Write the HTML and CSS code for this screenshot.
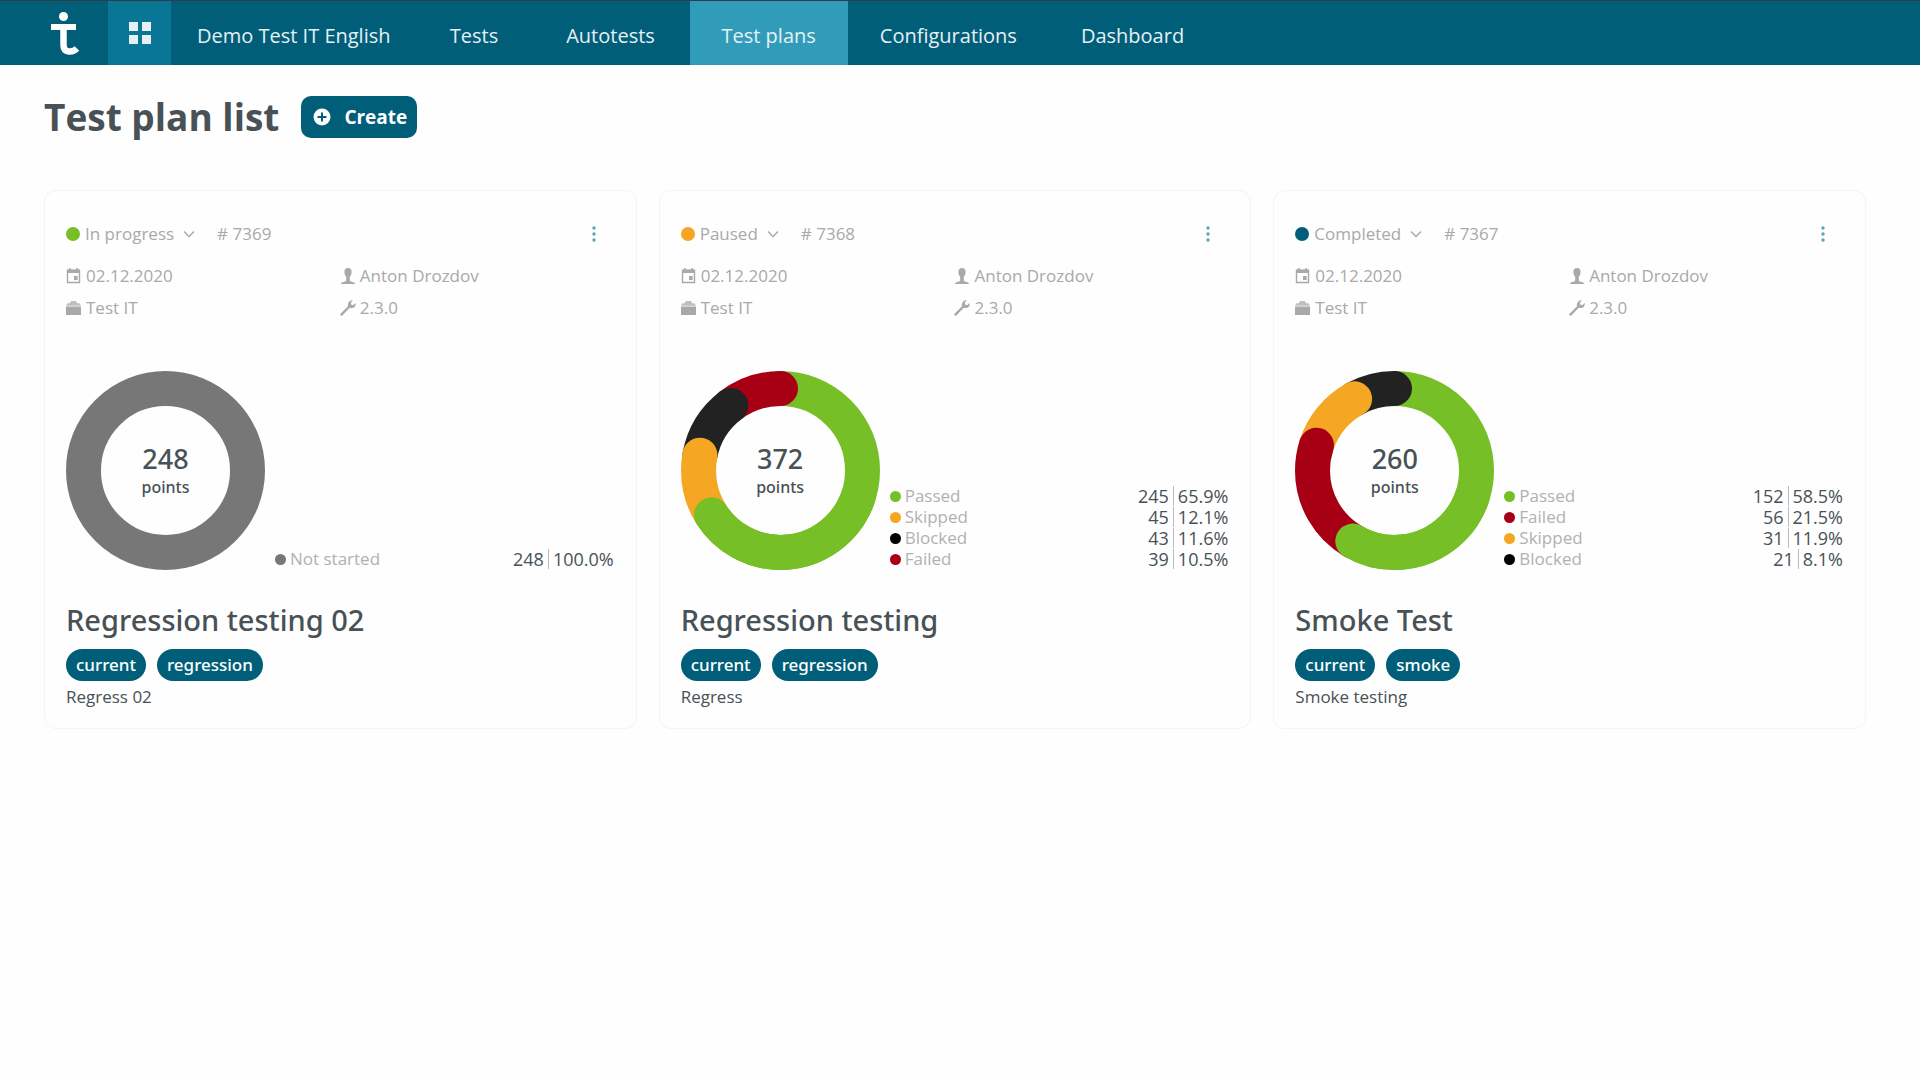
FILE: index.html
```html
<!DOCTYPE html>
<html lang="en">
<head>
<meta charset="utf-8">
<meta name="viewport" content="width=device-width, initial-scale=1">
<title>Test plans</title>
<link rel="stylesheet" href="styles.css">
</head>
<body>
<svg class="sprite" aria-hidden="true">
  <symbol id="i-calendar" viewBox="0 0 16 18"><path d="M1.500 3.500h12v12h-12z" fill="none" stroke="currentColor" stroke-width="1.400"/><path d="M1 2.500h13v3.500H1zM3 1h1.600v3H3zM10.400 1H12v3h-1.600zM8 9h3.600v4H8z"/></symbol>
  <symbol id="i-case" viewBox="0 0 16 18"><path d="M0 7.500h15V16H0z"/><path d="M0 6.700 1.500 4.300h2.300L5 2h5l1.200 2.300h2.300L15 6.700z" opacity=".75"/></symbol>
  <symbol id="i-user" viewBox="0 0 16 18"><path d="M8 1c2.300 0 3.600 1.500 3.600 3.900 0 2.300-.9 3.700-1.800 4.900v3.400c0 1 1.200 1.300 3 1.700 1.400.3 2.200.8 2.200 2.100H1c0-1.300.8-1.800 2.200-2.100 1.800-.4 3-.7 3-1.700V9.800C5.300 8.600 4.400 7.200 4.400 4.900 4.400 2.500 5.700 1 8 1z"/></symbol>
  <symbol id="i-wrench" viewBox="0 0 16 18"><path d="M12.800 1.300 10.900 3.600l.4 2.200 2.200.2L15.700 4c.6 2.700-1.400 5.200-4.100 5.100-.8 0-1.200-.1-1.800-.3L2.300 16.400c-1.200 1-2.800-.4-1.800-1.700L8 7.300C7.200 4.200 9.600 1 12.800 1.300z"/></symbol>
  <symbol id="i-chevron" viewBox="0 0 12 8"><path d="M1 1.500 6 6.500l5-5" fill="none" stroke="currentColor" stroke-width="1.500"/></symbol>
  <symbol id="i-more" viewBox="0 0 6 18"><circle cx="3" cy="3" r="1.700"/><circle cx="3" cy="9" r="1.700"/><circle cx="3" cy="15" r="1.700"/></symbol>
</svg>

<header class="topbar">
  <a class="logo" href="#" aria-label="Test IT home">
    <svg width="28" height="44" viewBox="0 0 28 44"><circle cx="12.500" cy="4.500" r="4.500" fill="#fff"/><path d="M0 15h25" fill="none" stroke="#fff" stroke-width="6"/><path d="M12.500 15v18c0 8.500 9.500 7.500 13.500 3.500" fill="none" stroke="#fff" stroke-width="6.500"/></svg>
  </a>
  <button class="apps" type="button" aria-label="Projects">
    <svg width="22" height="22" viewBox="0 0 22 22"><path d="M0 0h9v9H0zM13 0h9v9h-9zM0 13h9v9H0zM13 13h9v9h-9z"/></svg>
  </button>
  <nav class="menu">
    <a class="menu-project" href="#">Demo Test IT English</a>
    <a class="menu-short" href="#">Tests</a>
    <a href="#">Autotests</a>
    <a class="active" href="#" aria-current="page">Test plans</a>
    <a href="#">Configurations</a>
    <a href="#">Dashboard</a>
  </nav>
</header>

<main class="page">
  <div class="page-head">
    <h1>Test plan list</h1>
    <button class="create" type="button">
      <svg width="18" height="18" viewBox="0 0 18 18"><circle cx="9" cy="9" r="8.500" fill="#fff"/><path d="M9 4.500v9M4.500 9h9" stroke="#005e79" stroke-width="2"/></svg>
      Create
    </button>
  </div>

  <div class="plans">
    <article class="card">
      <div class="card-top">
        <label class="status"><span class="dot running"></span><select aria-label="Status"><option>In progress</option></select><svg class="chevron"><use href="#i-chevron"/></svg></label>
        <span># 7369</span>
        <button class="more" type="button" aria-label="More"><svg><use href="#i-more"/></svg></button>
      </div>
      <div class="meta">
        <span><svg><use href="#i-calendar"/></svg>02.12.2020</span>
        <span><svg><use href="#i-user"/></svg>Anton Drozdov</span>
        <span><svg><use href="#i-case"/></svg>Test IT</span>
        <span><svg><use href="#i-wrench"/></svg>2.3.0</span>
      </div>
      <div class="stats">
        <div class="donut">
          <svg viewBox="0 0 199 199"><circle class="arc s-none" cx="99.500" cy="99.500" r="82"/></svg>
          <div class="total"><strong>248</strong><span>points</span></div>
        </div>
        <table class="legend">
          <tr><th scope="row"><span class="dot none"></span>Not started</th><td><span>248</span><span class="pct">100.0%</span></td></tr>
        </table>
      </div>
      <h2>Regression testing 02</h2>
      <div class="tags"><span>current</span><span>regression</span></div>
      <p>Regress 02</p>
    </article>

    <article class="card">
      <div class="card-top">
        <label class="status"><span class="dot skipped"></span><select aria-label="Status"><option>Paused</option></select><svg class="chevron"><use href="#i-chevron"/></svg></label>
        <span># 7368</span>
        <button class="more" type="button" aria-label="More"><svg><use href="#i-more"/></svg></button>
      </div>
      <div class="meta">
        <span><svg><use href="#i-calendar"/></svg>02.12.2020</span>
        <span><svg><use href="#i-user"/></svg>Anton Drozdov</span>
        <span><svg><use href="#i-case"/></svg>Test IT</span>
        <span><svg><use href="#i-wrench"/></svg>2.3.0</span>
      </div>
      <div class="stats">
        <div class="donut">
          <svg viewBox="0 0 199 199">
            <circle class="arc s-passed" cx="99.500" cy="99.500" r="82" pathLength="100" stroke-dasharray="65.900 100"/>
            <circle class="arc s-failed" cx="99.500" cy="99.500" r="82" pathLength="100" stroke-dasharray="10.500 100" stroke-dashoffset="-89.500"/>
            <circle class="arc s-blocked" cx="99.500" cy="99.500" r="82" pathLength="100" stroke-dasharray="11.600 100" stroke-dashoffset="-78"/>
            <circle class="arc s-skipped" cx="99.500" cy="99.500" r="82" pathLength="100" stroke-dasharray="12.100 100" stroke-dashoffset="-65.900"/>
            <circle class="arc s-passed" cx="99.500" cy="99.500" r="82" pathLength="100" stroke-dasharray="35.900 100" stroke-dashoffset="-30"/>
          </svg>
          <div class="total"><strong>372</strong><span>points</span></div>
        </div>
        <table class="legend">
          <tr><th scope="row"><span class="dot passed"></span>Passed</th><td><span>245</span><span class="pct">65.9%</span></td></tr>
          <tr><th scope="row"><span class="dot skipped"></span>Skipped</th><td><span>45</span><span class="pct">12.1%</span></td></tr>
          <tr><th scope="row"><span class="dot blocked"></span>Blocked</th><td><span>43</span><span class="pct">11.6%</span></td></tr>
          <tr><th scope="row"><span class="dot failed"></span>Failed</th><td><span>39</span><span class="pct">10.5%</span></td></tr>
        </table>
      </div>
      <h2>Regression testing</h2>
      <div class="tags"><span>current</span><span>regression</span></div>
      <p>Regress</p>
    </article>

    <article class="card">
      <div class="card-top">
        <label class="status"><span class="dot completed"></span><select aria-label="Status"><option>Completed</option></select><svg class="chevron"><use href="#i-chevron"/></svg></label>
        <span># 7367</span>
        <button class="more" type="button" aria-label="More"><svg><use href="#i-more"/></svg></button>
      </div>
      <div class="meta">
        <span><svg><use href="#i-calendar"/></svg>02.12.2020</span>
        <span><svg><use href="#i-user"/></svg>Anton Drozdov</span>
        <span><svg><use href="#i-case"/></svg>Test IT</span>
        <span><svg><use href="#i-wrench"/></svg>2.3.0</span>
      </div>
      <div class="stats">
        <div class="donut">
          <svg viewBox="0 0 199 199">
            <circle class="arc s-passed" cx="99.500" cy="99.500" r="82" pathLength="100" stroke-dasharray="58.500 100"/>
            <circle class="arc s-blocked" cx="99.500" cy="99.500" r="82" pathLength="100" stroke-dasharray="8.100 100" stroke-dashoffset="-91.900"/>
            <circle class="arc s-skipped" cx="99.500" cy="99.500" r="82" pathLength="100" stroke-dasharray="11.900 100" stroke-dashoffset="-80"/>
            <circle class="arc s-failed" cx="99.500" cy="99.500" r="82" pathLength="100" stroke-dasharray="21.500 100" stroke-dashoffset="-58.500"/>
            <circle class="arc s-passed" cx="99.500" cy="99.500" r="82" pathLength="100" stroke-dasharray="28.500 100" stroke-dashoffset="-30"/>
          </svg>
          <div class="total"><strong>260</strong><span>points</span></div>
        </div>
        <table class="legend">
          <tr><th scope="row"><span class="dot passed"></span>Passed</th><td><span>152</span><span class="pct">58.5%</span></td></tr>
          <tr><th scope="row"><span class="dot failed"></span>Failed</th><td><span>56</span><span class="pct">21.5%</span></td></tr>
          <tr><th scope="row"><span class="dot skipped"></span>Skipped</th><td><span>31</span><span class="pct">11.9%</span></td></tr>
          <tr><th scope="row"><span class="dot blocked"></span>Blocked</th><td><span>21</span><span class="pct">8.1%</span></td></tr>
        </table>
      </div>
      <h2>Smoke Test</h2>
      <div class="tags"><span>current</span><span>smoke</span></div>
      <p>Smoke testing</p>
    </article>
  </div>
</main>
</body>
</html>
```
FILE: styles.css
```css
* { box-sizing: border-box; }
body {
  margin: 0;
  background: #fefefe;
  color: #485156;
  font: 17px/24px "Open Sans", "Noto Sans", sans-serif;
}
button, select {
  margin: 0;
  padding: 0;
  border: 0;
  background: none;
  color: inherit;
  font: inherit;
  cursor: pointer;
}
.sprite { display: none; }
svg { display: block; flex: none; fill: currentColor; }

.topbar {
  display: flex;
  height: 65px;
  border-top: 1px solid #333c43;
  background: #005e79;
  color: #e6f0f4;
}
.logo { width: 108px; padding: 11px 0 0 51px; }
.apps { display: grid; place-items: center; width: 63px; background: #0a7696; color: #e6f0f4; }
.menu { display: flex; }
.menu a {
  display: flex;
  align-items: center;
  justify-content: center;
  min-width: 158px;
  padding: 5px 32px 0;
  color: inherit;
  font-size: 20px;
  white-space: nowrap;
  text-decoration: none;
}
.menu .menu-project { padding-left: 26px; padding-right: 26px; }
.menu .menu-short { min-width: 115px; }
.menu .active { background: #319cba; }

.page { padding: 31px 54px 31px 44px; }
.page-head { display: flex; align-items: center; gap: 22px; margin-bottom: 52px; }
h1 { margin: 0; font-size: 37px; line-height: 42px; font-weight: 700; }
.create {
  display: flex;
  align-items: center;
  gap: 13px;
  height: 42px;
  padding: 0 10px 0 12px;
  border-radius: 10px;
  background: #005e79;
  color: #fff;
  font-size: 19px;
  font-weight: 700;
}

.plans { display: grid; grid-template-columns: repeat(3, 1fr); gap: 22px; }
.card {
  padding: 31px 22px 19px 21px;
  border: 1px solid #f4f4f4;
  border-radius: 12px;
}
.dot { flex: none; width: 11px; height: 11px; border-radius: 50%; }
.passed, .running { background: #76bf26; }
.skipped { background: #f5a623; }
.blocked { background: #000; }
.failed { background: #a70014; }
.none { background: #777; }
.completed { background: #005e79; }

.card-top, .meta { color: #a9a9a9; }
.card-top { display: flex; align-items: center; gap: 22px; }
.status { display: flex; align-items: center; }
.status .dot { width: 14px; height: 14px; margin-right: 5px; }
.status select { appearance: none; field-sizing: content; height: 24px; }
.chevron { width: 12px; height: 8px; margin-left: 9px; }
.more { margin: 0 17px 0 auto; color: #5aa5b8; }
.more svg { width: 6px; height: 18px; }

.meta { display: grid; grid-template-columns: 1fr 1fr; margin-top: 14px; line-height: 32px; }
.meta span { display: flex; align-items: center; gap: 4px; }
.meta svg { width: 16px; height: 18px; }

.stats { display: flex; align-items: flex-end; gap: 10px; margin-top: 47px; }
.donut { display: grid; flex: none; width: 199px; height: 199px; }
.donut > * { grid-area: 1 / 1; }
.arc {
  fill: none;
  stroke-width: 35;
  stroke-linecap: round;
  transform: rotate(-90deg);
  transform-origin: center;
}
.s-none { stroke: #777; }
.s-passed { stroke: #76bf26; }
.s-skipped { stroke: #f5a623; }
.s-blocked { stroke: #222; }
.s-failed { stroke: #a70014; }
.total {
  display: flex;
  flex-direction: column;
  align-items: center;
  justify-content: center;
  font-family: "Noto Sans", sans-serif;
  font-weight: 500;
}
.total strong { font-size: 27px; line-height: 32px; font-weight: 500; }
.total span { font-size: 16px; line-height: 24px; }

.legend { flex: 1; border-collapse: collapse; line-height: 20px; }
.legend th, .legend td { padding: 0 0 1px; }
.legend th { display: flex; align-items: center; gap: 4px; color: #b1b1b1; font-weight: 400; }
.legend td { text-align: right; font-size: 18px; }
.legend td span { display: inline-block; vertical-align: top; }
.legend .pct { margin-left: 4px; padding-left: 4px; border-left: 1px solid #bbb; }

h2 {
  margin: 30px 0 9px;
  font: 500 29px/40px "Noto Sans", sans-serif;
}
.tags { display: flex; gap: 11px; }
.tags span {
  padding: 0 10px;
  border-radius: 16px;
  background: #005e79;
  color: #fff;
  font: 500 17px/32px "Noto Sans", sans-serif;
}
p { margin: 4px 0 0; }
```
